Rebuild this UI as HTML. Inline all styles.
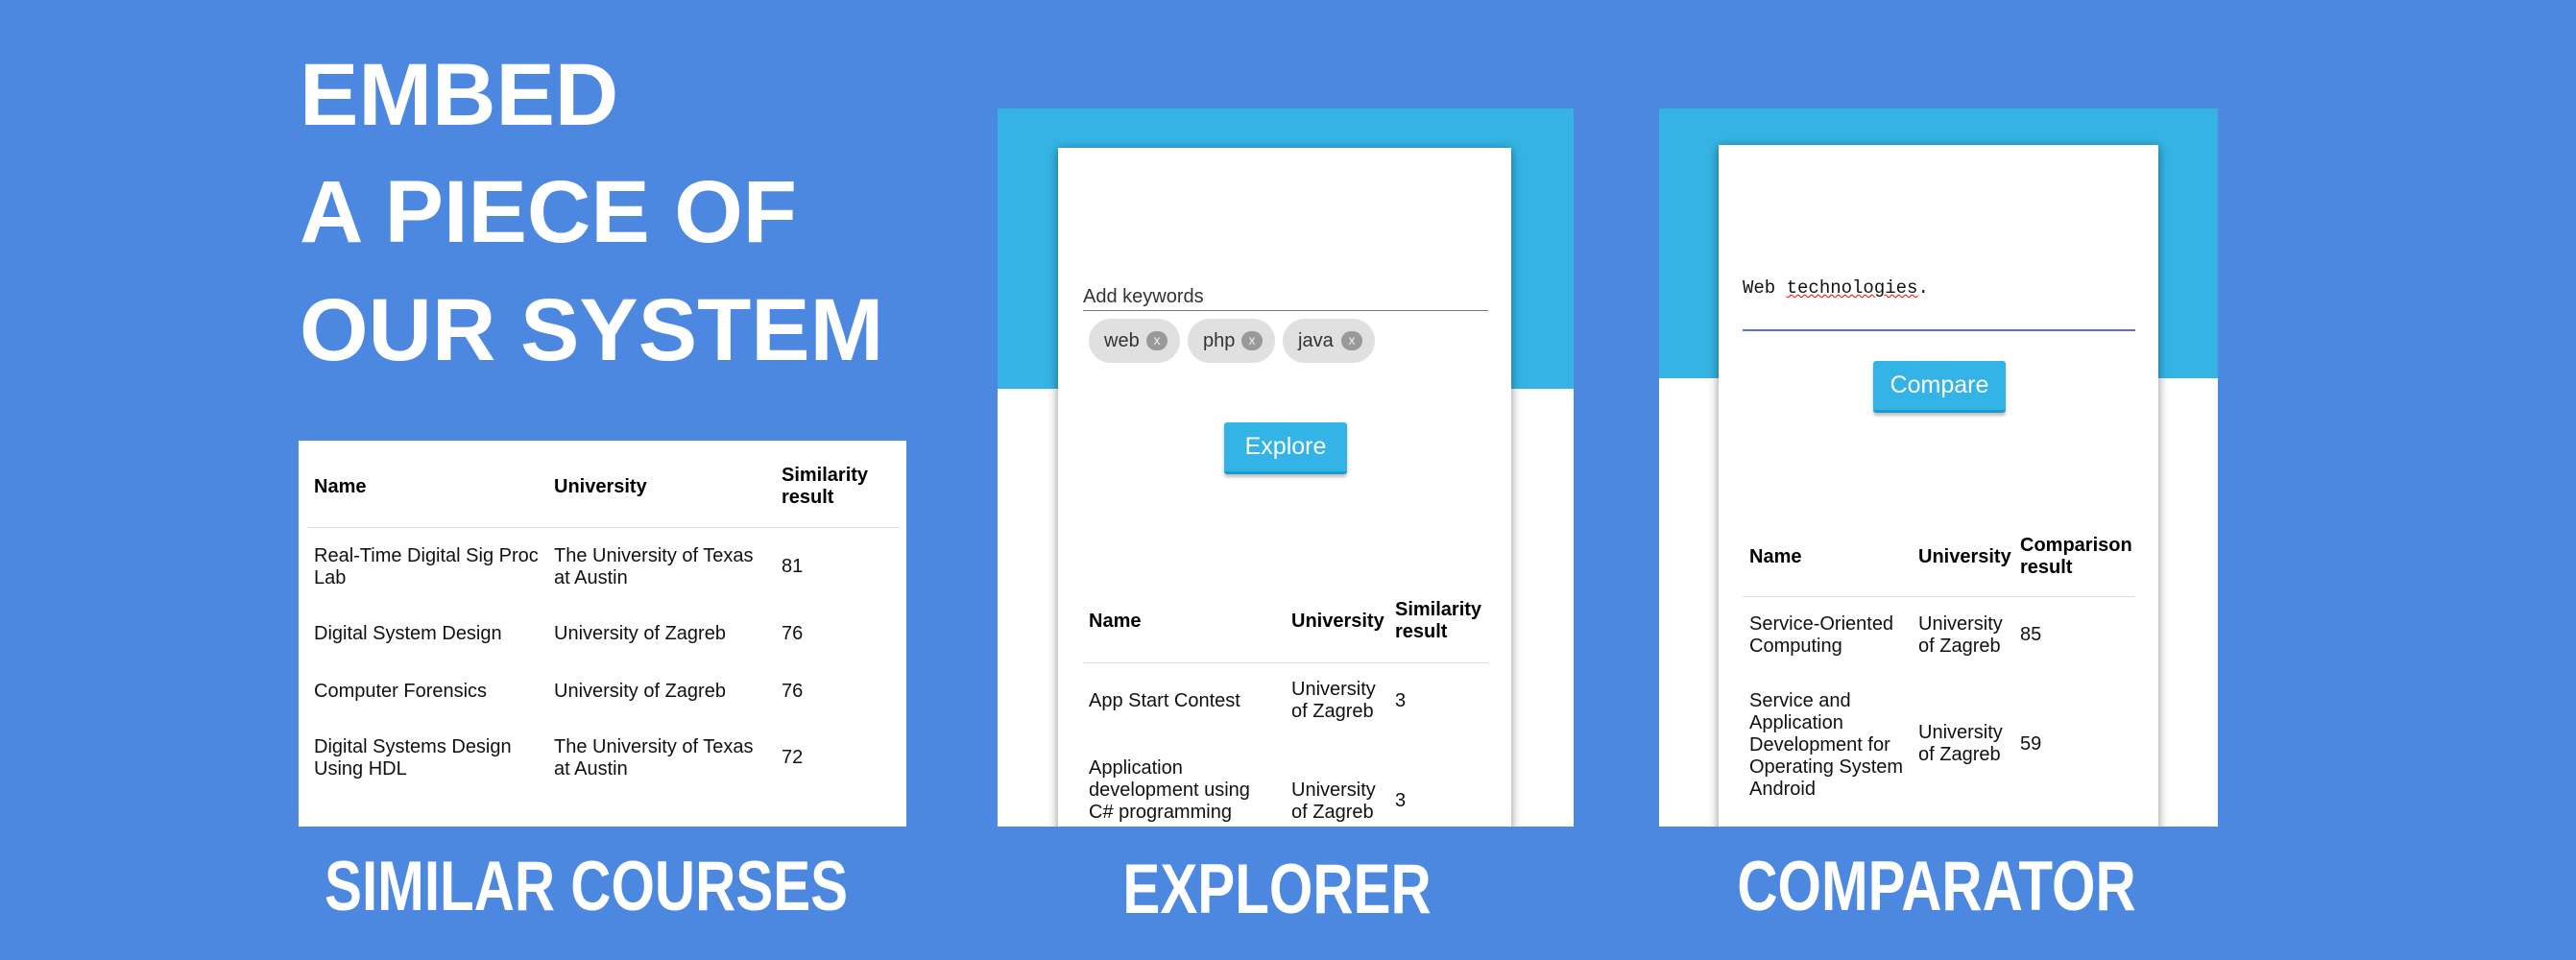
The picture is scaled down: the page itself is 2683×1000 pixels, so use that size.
<!DOCTYPE html>
<html><head><meta charset="utf-8"><style>
*{margin:0;padding:0;box-sizing:border-box}
body{width:2683px;height:1000px;background:#4d88e0;position:relative;overflow:hidden;font-family:"Liberation Sans",sans-serif}
.a{position:absolute}
.big{color:#fff;font-weight:bold;font-family:"Liberation Sans",sans-serif;white-space:nowrap;line-height:1}
.lab{transform:scaleX(0.8);transform-origin:center}
.t{font-size:20px;line-height:23px;color:#111;position:absolute}
.b{font-weight:bold;color:#000}
.card{background:#fff;box-shadow:0 2px 10px rgba(0,0,0,.45)}
.chip{position:absolute;top:332px;height:46px;border-radius:23px;background:#e0e0e0;font-size:20px;color:#333;line-height:46px;padding-left:16px}
.chip i{position:absolute;top:13px;width:22px;height:20px;border-radius:10px;background:#999;color:#eee;font-style:normal;font-size:14px;line-height:19px;text-align:center}
.btn{position:absolute;background:#33b3e6;color:#fff;font-size:25px;text-align:center;border-radius:3px;box-shadow:0 3px 3px rgba(0,0,0,.25);border-bottom:3px solid #1d9bd0}
.ln{position:absolute;height:1px;background:#ddd}
</style></head><body>
<div class="a big" style="left:312px;top:53px;font-size:92px">EMBED</div>
<div class="a big" style="left:312px;top:175px;font-size:92px">A PIECE OF</div>
<div class="a big" style="left:312px;top:298px;font-size:92px">OUR SYSTEM</div>

<div class="a" style="left:311px;top:459px;width:633px;height:402px;background:#fff"></div>
<div class="t b" style="left:327px;top:496px">Name</div>
<div class="t b" style="left:577px;top:496px">University</div>
<div class="t b" style="left:814px;top:484px">Similarity<br>result</div>
<div class="ln" style="left:320px;top:549px;width:617px"></div>
<div class="t" style="left:327px;top:568px">Real-Time Digital Sig Proc<br>Lab</div>
<div class="t" style="left:577px;top:568px">The University of Texas<br>at Austin</div>
<div class="t" style="left:814px;top:579px">81</div>
<div class="t" style="left:327px;top:649px">Digital System Design</div>
<div class="t" style="left:577px;top:649px">University of Zagreb</div>
<div class="t" style="left:814px;top:649px">76</div>
<div class="t" style="left:327px;top:709px">Computer Forensics</div>
<div class="t" style="left:577px;top:709px">University of Zagreb</div>
<div class="t" style="left:814px;top:709px">76</div>
<div class="t" style="left:327px;top:767px">Digital Systems Design<br>Using HDL</div>
<div class="t" style="left:577px;top:767px">The University of Texas<br>at Austin</div>
<div class="t" style="left:814px;top:778px">72</div>
<div class="a big lab" style="left:274px;width:640px;text-align:center;top:887px;font-size:73px">SIMILAR COURSES</div>

<!-- Explorer -->
<div class="a" style="left:1039px;top:113px;width:600px;height:748px;background:#fff;overflow:hidden">
<div class="a" style="left:0;top:0;width:600px;height:292px;background:#35b4e4"></div>
<div class="a card" style="left:63px;top:41px;width:472px;height:720px"></div>
</div>
<div class="t" style="left:1128px;top:298px;color:#333">Add keywords</div>
<div class="a" style="left:1128px;top:323px;width:422px;height:1px;background:#777"></div>
<div class="chip" style="left:1134px;width:95px">web<i style="left:60px">x</i></div>
<div class="chip" style="left:1237px;width:91px">php<i style="left:56px">x</i></div>
<div class="chip" style="left:1336px;width:96px">java<i style="left:61px">x</i></div>
<div class="btn" style="left:1275px;top:440px;width:128px;height:54px;line-height:50px">Explore</div>
<div class="t b" style="left:1134px;top:636px">Name</div>
<div class="t b" style="left:1345px;top:636px">University</div>
<div class="t b" style="left:1453px;top:624px">Similarity<br>result</div>
<div class="ln" style="left:1128px;top:690px;width:422px"></div>
<div class="t" style="left:1134px;top:719px">App Start Contest</div>
<div class="t" style="left:1345px;top:707px">University<br>of Zagreb</div>
<div class="t" style="left:1453px;top:719px">3</div>
<div class="t" style="left:1134px;top:789px">Application<br>development using<br>C# programming</div>
<div class="t" style="left:1345px;top:812px">University<br>of Zagreb</div>
<div class="t" style="left:1453px;top:823px">3</div>
<div class="a" style="left:1000px;top:861px;width:700px;height:139px;background:#4d88e0"></div>
<div class="a big lab" style="left:1030px;width:600px;text-align:center;top:890px;font-size:73px">EXPLORER</div>

<!-- Comparator -->
<div class="a" style="left:1728px;top:113px;width:582px;height:748px;background:#fff;overflow:hidden">
<div class="a" style="left:0;top:0;width:582px;height:281px;background:#35b4e4"></div>
<div class="a card" style="left:62px;top:38px;width:458px;height:720px"></div>
</div>
<div class="a" style="left:1815px;top:289px;font-family:'Liberation Mono',monospace;font-size:19px;color:#111">Web <span style="text-decoration:underline wavy red;text-decoration-thickness:1px">technologies</span>.</div>
<div class="a" style="left:1815px;top:343px;width:409px;height:2px;background:#5b6ee0"></div>
<div class="btn" style="left:1951px;top:376px;width:138px;height:54px;line-height:50px">Compare</div>
<div class="t b" style="left:1822px;top:569px">Name</div>
<div class="t b" style="left:1998px;top:569px">University</div>
<div class="t b" style="left:2104px;top:557px">Comparison<br>result</div>
<div class="ln" style="left:1815px;top:621px;width:409px"></div>
<div class="t" style="left:1822px;top:639px">Service-Oriented<br>Computing</div>
<div class="t" style="left:1998px;top:639px">University<br>of Zagreb</div>
<div class="t" style="left:2104px;top:650px">85</div>
<div class="t" style="left:1822px;top:719px">Service and<br>Application<br>Development for<br>Operating System<br>Android</div>
<div class="t" style="left:1998px;top:752px">University<br>of Zagreb</div>
<div class="t" style="left:2104px;top:764px">59</div>
<div class="a" style="left:1700px;top:861px;width:700px;height:139px;background:#4d88e0"></div>
<div class="a big lab" style="left:1726px;width:582px;text-align:center;top:887px;font-size:73px">COMPARATOR</div>
</body></html>
